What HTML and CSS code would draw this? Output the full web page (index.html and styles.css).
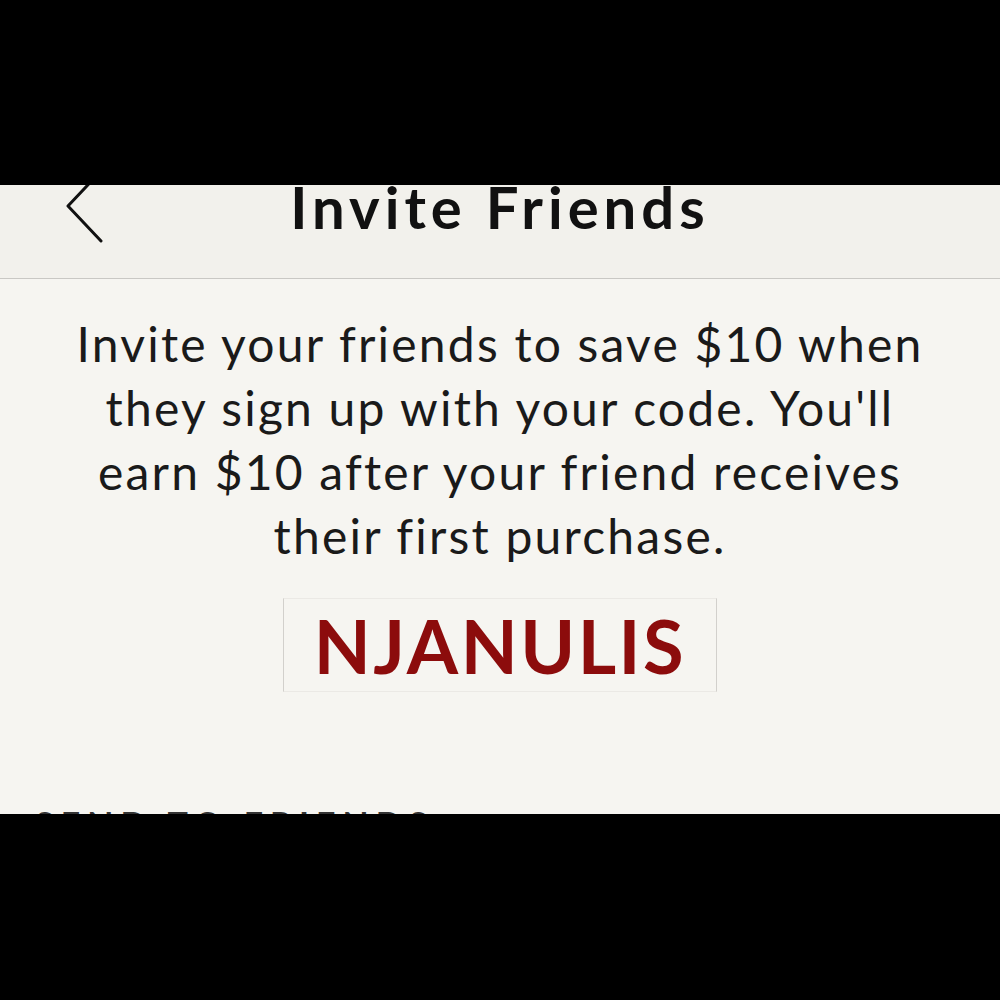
FILE: index.html
```html
<!DOCTYPE html>
<html lang="en">
<head>
    <meta charset="UTF-8">
    <meta name="viewport" content="width=device-width, initial-scale=1.0">
    <title>Invite Friends</title>
    <link rel="stylesheet" href="styles.css">
</head>
<body>

<div class="screen">
    <header class="nav-bar">
        <a class="back-button" href="#">
            <svg width="44" height="90" viewBox="0 0 44 90">
                <polyline points="37,5 4,40 37,75" fill="none" stroke="#111" stroke-width="3" stroke-linecap="round" stroke-linejoin="round"/>
            </svg>
        </a>
        <h1>Invite Friends</h1>
        <span></span>
    </header>

    <section class="invite">
        <p class="invite-text">
            Invite your friends to save $10 when<br>
            they sign up with your code. You'll<br>
            earn $10 after your friend receives<br>
            their first purchase.
        </p>
        <div class="code-box">NJANULIS</div>
    </section>

    <h3 class="section-title">SEND TO FRIENDS</h3>
</div>

</body>
</html>
```

FILE: styles.css
```css
/* Stylování stránky */
body {
    margin: 0;
    padding-top: 185px;
    background-color: #000000;
    font-family: Lato, "Open Sans", sans-serif;
}
.screen {
    height: 629px;
    overflow: hidden;
    background: #f6f5f1;
}
.nav-bar {
    display: grid;
    grid-template-columns: 1fr auto 1fr;
    align-items: center;
    height: 134px;
    margin-top: -40px;
    background: #f2f1ec;
    border-bottom: 1px solid #c9c8c4;
    box-sizing: border-box;
}
.back-button {
    display: flex;
    padding-left: 64px;
    padding-bottom: 2px;
}
.nav-bar h1 {
    margin: 0;
    font-size: 58px;
    font-weight: 700;
    letter-spacing: 5px;
    color: #111111;
    padding-bottom: 10px;
}
.invite {
    display: flex;
    flex-direction: column;
    align-items: center;
}
.invite-text {
    margin: 33px 0 0;
    font-size: 48px;
    line-height: 64px;
    letter-spacing: 2.2px;
    text-align: center;
    color: #1a1a1a;
}
.code-box {
    margin-top: 30px;
    width: 434px;
    height: 94px;
    box-sizing: border-box;
    border: 1px solid #ebe9e5;
    border-left-color: #d2d0cc;
    border-right-color: #d2d0cc;
    display: flex;
    align-items: center;
    justify-content: center;
    font-size: 74px;
    font-weight: 700;
    letter-spacing: 2.5px;
    color: #8c0c0c;
}
.section-title {
    margin: 111px 0 0 35px;
    font-size: 34px;
    font-weight: 700;
    letter-spacing: 7px;
    color: #333333;
}
```
